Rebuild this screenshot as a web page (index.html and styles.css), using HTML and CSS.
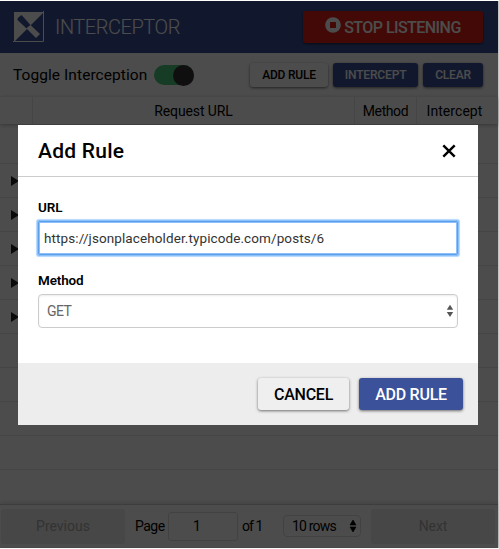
FILE: index.html
```html
<!DOCTYPE html>
<html lang="en">
<head>
<meta charset="utf-8">
<title>Interceptor</title>
<link rel="stylesheet" href="styles.css">
</head>
<body>
<div class="app">
  <header class="header">
    <svg class="logo" width="32" height="32" viewBox="0 0 32 32">
      <path d="M1 1H31L1 31Z" fill="#fff"/>
      <path d="M30.500 0V30.500H0" fill="none" stroke="#fff"/>
      <path d="M9 4.500L17.500 14L13.500 17.500L4.500 9Q4 8 5 7L7 5Q8 4 9 4.500Z" fill="#3b5199"/>
      <path d="M17.500 14L27 23L23 27L13.500 17.500Z" fill="#fff"/>
    </svg>
    <h1 class="brand">INTERCEPTOR</h1>
    <button class="btn stop">
      <svg width="16" height="16" viewBox="0 0 16 16"><circle cx="8" cy="8" r="7.800" fill="#fff"/><rect x="5" y="5" width="6" height="6" rx=".5" fill="#dc1e14"/></svg>
      <span>STOP LISTENING</span>
    </button>
  </header>
  <div class="toolbar">
    <span class="toggle-label">Toggle Interception</span>
    <span class="switch"><span class="knob"></span></span>
    <button class="btn small first">ADD RULE</button>
    <button class="btn small primary intercept">INTERCEPT</button>
    <button class="btn small primary clear">CLEAR</button>
  </div>
  <div class="thead"><span></span><span>Request URL</span><span>Method</span><span>Intercept</span></div>
  <div class="tbody">
    <div class="row lead"></div>
    <div class="row"><i class="arrow"></i></div>
    <div class="row"><i class="arrow"></i></div>
    <div class="row"><i class="arrow"></i></div>
    <div class="row"><i class="arrow"></i></div>
    <div class="row"><i class="arrow"></i></div>
    <div class="row"></div>
    <div class="row"></div>
    <div class="row"></div>
    <div class="row"></div>
  </div>
  <footer class="pager">
    <div class="page-btn prev">Previous</div>
    <span class="page-label">Page</span>
    <div class="page-num">1</div>
    <span class="page-total">of 1</span>
    <div class="rows"><span>10 rows</span><svg width="8" height="14" viewBox="0 0 8 14"><path d="M1 6L4 1L7 6ZM1 8L4 13L7 8Z" stroke="#000" stroke-width=".6"/></svg></div>
    <div class="page-btn next">Next</div>
  </footer>
</div>
<div class="overlay">
  <section class="modal">
    <div class="modal-head">
      <h2>Add Rule</h2>
      <svg width="14" height="14" viewBox="0 0 14 14"><path d="M1.300 1.300L12.700 12.700M12.700 1.300L1.300 12.700" stroke="#000" stroke-width="2.400"/></svg>
    </div>
    <div class="modal-body">
      <div class="label url-label">URL</div>
      <div class="field focus"><span>https://jsonplaceholder.typicode.com/posts/6</span></div>
      <div class="label method-label">Method</div>
      <div class="field select"><span>GET</span><svg width="8" height="14" viewBox="0 0 8 14"><path d="M.8 5.800L4 .8L7.200 5.800ZM.8 8L4 13L7.200 8Z" fill="#555"/></svg></div>
    </div>
    <div class="modal-foot">
      <button class="btn large cancel">CANCEL</button>
      <button class="btn large primary add">ADD RULE</button>
    </div>
  </section>
</div>
</body>
</html>
```
FILE: styles.css
```css
* { box-sizing: border-box; }
body { margin: 0; width: 499px; height: 549px; overflow: hidden; background: #fff; color: #000; font-family: Roboto, sans-serif; font-size: 14px; position: relative; }
h1, h2 { margin: 0; font-weight: 400; }
span, h1, h2 { white-space: nowrap; }
.app { width: 499px; height: 547px; margin-top: 1px; display: flex; flex-direction: column; background: #fff; border-right: 1px solid #c4c4c4; }
.header { height: 52px; background: #3b5199; display: flex; align-items: center; padding: 0 15px 0 13px; }
.logo { flex: none; }
.brand { color: #fff; font-size: 20px; font-weight: 300; margin-left: 10px; letter-spacing: -.45px; }
.btn { border: 0; margin: 0; padding: 0; display: flex; align-items: center; justify-content: center; border-radius: 3px; font-family: inherit; font-weight: 500; background: #fff; color: #000; box-shadow: 0 1px 3px rgba(0,0,0,.55); white-space: nowrap; flex: none; }
.primary { background: #3b5199; color: #fff; }
.stop { margin-left: auto; width: 180px; height: 32px; background: #dc1e14; color: #fff; font-size: 16px; gap: 3px; letter-spacing: -.55px; }
.stop svg { margin-top: -4px; }
.toolbar { height: 44px; display: flex; align-items: center; padding: 0 15px 0 13px; flex: none; }
.toggle-label { width: 141px; font-size: 15.500px; letter-spacing: .07px; }
.switch { width: 40px; height: 20px; border-radius: 10px; background: #4cc87c; display: flex; justify-content: flex-end; }
.knob { width: 21px; height: 21px; border-radius: 50%; background: #333; }
.small { height: 24px; font-size: 12px; margin-left: 5px; letter-spacing: -.2px; }
.first { margin-left: auto; width: 78px; }
.intercept { width: 85px; letter-spacing: -.15px; }
.clear { width: 60px; }
.thead { height: 27px; flex: none; display: grid; grid-template-columns: 33px 322px 62px 81px; box-shadow: 0 1px 4px rgba(0,0,0,.3); }
.thead span { display: flex; align-items: center; justify-content: center; border-right: 1px solid #e8e8e8; letter-spacing: -.1px; }
.thead span:nth-child(3) { letter-spacing: -.4px; }
.thead span:last-child { border-right: 0; padding-right: 6px; letter-spacing: .05px; }
.tbody { height: 380px; flex: none; }
.row { height: 34px; border-bottom: 1px solid #e6e6e6; display: flex; align-items: center; padding-left: 11px; }
.lead { height: 40px; }
.arrow { border-left: 8px solid #222; border-top: 5px solid transparent; border-bottom: 5px solid transparent; }
.pager { height: 43px; border-top: 1px solid #ccc; box-shadow: 0 -1px 5px rgba(0,0,0,.15); display: flex; align-items: center; padding: 0 3px 0 1px; flex: none; }
.page-btn { width: 124px; height: 35px; background: #eee; color: #ababab; display: flex; align-items: center; justify-content: center; border-radius: 3px; letter-spacing: 0; }
.prev { padding-right: 0; }
.page-label { width: 33px; margin-left: 10px; letter-spacing: -.5px; }
.page-num { width: 70px; height: 29px; border: 1px solid #ddd; border-radius: 3px; display: flex; align-items: center; justify-content: center; padding-right: 12px; }
.page-total { margin-left: 4px; width: 37px; letter-spacing: -.9px; }
.rows { width: 78px; height: 22px; border: 1px solid #ddd; border-radius: 4px; margin-left: 4px; display: flex; align-items: center; justify-content: space-between; padding: 0 3px 0 8px; letter-spacing: -.8px; }
.next { margin-left: auto; letter-spacing: -.1px; }
.overlay { position: absolute; left: 0; top: 1px; width: 498px; height: 547px; background: rgba(0,0,0,.7); padding: 124px 20px 0 18px; }
.modal { width: 460px; height: 300px; background: #fff; }
.modal-head { height: 52px; border-bottom: 1px solid #ccc; display: flex; align-items: center; justify-content: space-between; padding: 0 22px 0 20px; }
.modal-head h2 { font-size: 21px; font-weight: 500; letter-spacing: .25px; }
.modal-body { height: 186px; padding: 21px 20px 0; }
.label { height: 18px; line-height: 18px; font-weight: 600; font-size: 13.500px; letter-spacing: -.15px; }
.field { height: 34px; margin-top: 5px; border: 1px solid #ccc; border-radius: 4px; display: flex; align-items: center; justify-content: space-between; color: #333; }
.focus { border-color: #5a9fe8; border-radius: 1px; padding-left: 5px; box-shadow: inset 0 0 0 1px #8bc0fa, 0 0 0 1px #8bc0fa, 0 0 1px 2px #b5d8ff; font-size: 13.500px; letter-spacing: .1px; }
.method-label { margin-top: 16px; }
.select { color: #666; padding: 0 3px 0 8px; box-shadow: inset 0 1px 2px rgba(0,0,0,.08); letter-spacing: -.6px; }
.modal-foot { height: 62px; background: #ededed; display: flex; align-items: center; justify-content: flex-end; gap: 10px; padding-right: 15px; }
.large { height: 32px; font-size: 16px; letter-spacing: -.25px; }
.cancel { width: 91px; background: #efefef; }
.add { width: 104px; }
```
